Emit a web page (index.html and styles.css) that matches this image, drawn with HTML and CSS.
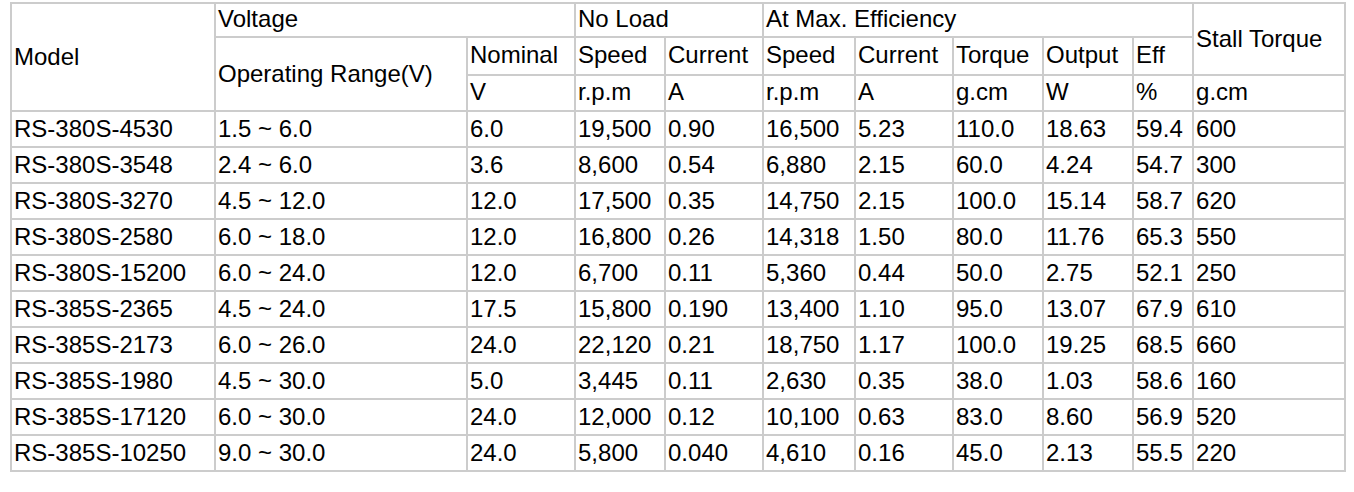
FILE: index.html
```html
<!DOCTYPE html>
<html>
<head>
<meta charset="utf-8">
<link rel="stylesheet" href="styles.css">
</head>
<body>
<table class="spec">
<colgroup>
<col class="c-model"><col class="c-range"><col class="c-nom"><col class="c-nlspeed"><col class="c-nlcur"><col class="c-mspeed"><col class="c-mcur"><col class="c-torque"><col class="c-output"><col class="c-eff"><col class="c-stall">
</colgroup>
<thead>
<tr class="h1">
<th rowspan="3" class="mid">Model</th>
<th colspan="2">Voltage</th>
<th colspan="2">No Load</th>
<th colspan="5">At Max. Efficiency</th>
<th rowspan="2" class="mid">Stall Torque</th>
</tr>
<tr class="h2">
<th rowspan="2" class="mid">Operating Range(V)</th>
<th>Nominal</th><th>Speed</th><th>Current</th><th>Speed</th><th>Current</th><th>Torque</th><th>Output</th><th>Eff</th>
</tr>
<tr class="h3">
<th>V</th><th>r.p.m</th><th>A</th><th>r.p.m</th><th>A</th><th>g.cm</th><th>W</th><th>%</th><th>g.cm</th>
</tr>
</thead>
<tbody>
<tr><td>RS-380S-4530</td><td>1.5 ~ 6.0</td><td>6.0</td><td>19,500</td><td>0.90</td><td>16,500</td><td>5.23</td><td>110.0</td><td>18.63</td><td>59.4</td><td>600</td></tr>
<tr><td>RS-380S-3548</td><td>2.4 ~ 6.0</td><td>3.6</td><td>8,600</td><td>0.54</td><td>6,880</td><td>2.15</td><td>60.0</td><td>4.24</td><td>54.7</td><td>300</td></tr>
<tr><td>RS-380S-3270</td><td>4.5 ~ 12.0</td><td>12.0</td><td>17,500</td><td>0.35</td><td>14,750</td><td>2.15</td><td>100.0</td><td>15.14</td><td>58.7</td><td>620</td></tr>
<tr><td>RS-380S-2580</td><td>6.0 ~ 18.0</td><td>12.0</td><td>16,800</td><td>0.26</td><td>14,318</td><td>1.50</td><td>80.0</td><td>11.76</td><td>65.3</td><td>550</td></tr>
<tr><td>RS-380S-15200</td><td>6.0 ~ 24.0</td><td>12.0</td><td>6,700</td><td>0.11</td><td>5,360</td><td>0.44</td><td>50.0</td><td>2.75</td><td>52.1</td><td>250</td></tr>
<tr><td>RS-385S-2365</td><td>4.5 ~ 24.0</td><td>17.5</td><td>15,800</td><td>0.190</td><td>13,400</td><td>1.10</td><td>95.0</td><td>13.07</td><td>67.9</td><td>610</td></tr>
<tr><td>RS-385S-2173</td><td>6.0 ~ 26.0</td><td>24.0</td><td>22,120</td><td>0.21</td><td>18,750</td><td>1.17</td><td>100.0</td><td>19.25</td><td>68.5</td><td>660</td></tr>
<tr><td>RS-385S-1980</td><td>4.5 ~ 30.0</td><td>5.0</td><td>3,445</td><td>0.11</td><td>2,630</td><td>0.35</td><td>38.0</td><td>1.03</td><td>58.6</td><td>160</td></tr>
<tr><td>RS-385S-17120</td><td>6.0 ~ 30.0</td><td>24.0</td><td>12,000</td><td>0.12</td><td>10,100</td><td>0.63</td><td>83.0</td><td>8.60</td><td>56.9</td><td>520</td></tr>
<tr><td>RS-385S-10250</td><td>9.0 ~ 30.0</td><td>24.0</td><td>5,800</td><td>0.040</td><td>4,610</td><td>0.16</td><td>45.0</td><td>2.13</td><td>55.5</td><td>220</td></tr>
</tbody>
</table>
</body>
</html>
```

FILE: styles.css
```css
html, body {
  margin: 0;
  padding: 0;
  background: #fff;
}

.spec {
  margin: 2px 0 0 10px;
  width: 1336px;
  table-layout: fixed;
  border-collapse: collapse;
  border: 2px solid #cccccc;
  font-family: "Liberation Sans", Arial, sans-serif;
  font-size: 24px;
  line-height: 28px;
  color: #000;
}

.spec th,
.spec td {
  border: 2px solid #cccccc;
  padding: 3px 2px 3px 2px;
  text-align: left;
  font-weight: normal;
  vertical-align: top;
  white-space: nowrap;
  overflow: hidden;
}

.spec .h1 th { padding-top: 1px; padding-bottom: 3px; }
.spec .h2 th { padding-top: 3px; padding-bottom: 5px; }
.spec .h3 th { padding-top: 2px; padding-bottom: 4px; }
.spec th.mid { vertical-align: middle; padding-top: 0; padding-bottom: 0; }

.c-model { width: 204px; }
.c-range { width: 252px; }
.c-nom { width: 108px; }
.c-nlspeed { width: 90px; }
.c-nlcur { width: 98px; }
.c-mspeed { width: 92px; }
.c-mcur { width: 98px; }
.c-torque { width: 90px; }
.c-output { width: 90px; }
.c-eff { width: 60px; }
.c-stall { width: 152px; }
```
